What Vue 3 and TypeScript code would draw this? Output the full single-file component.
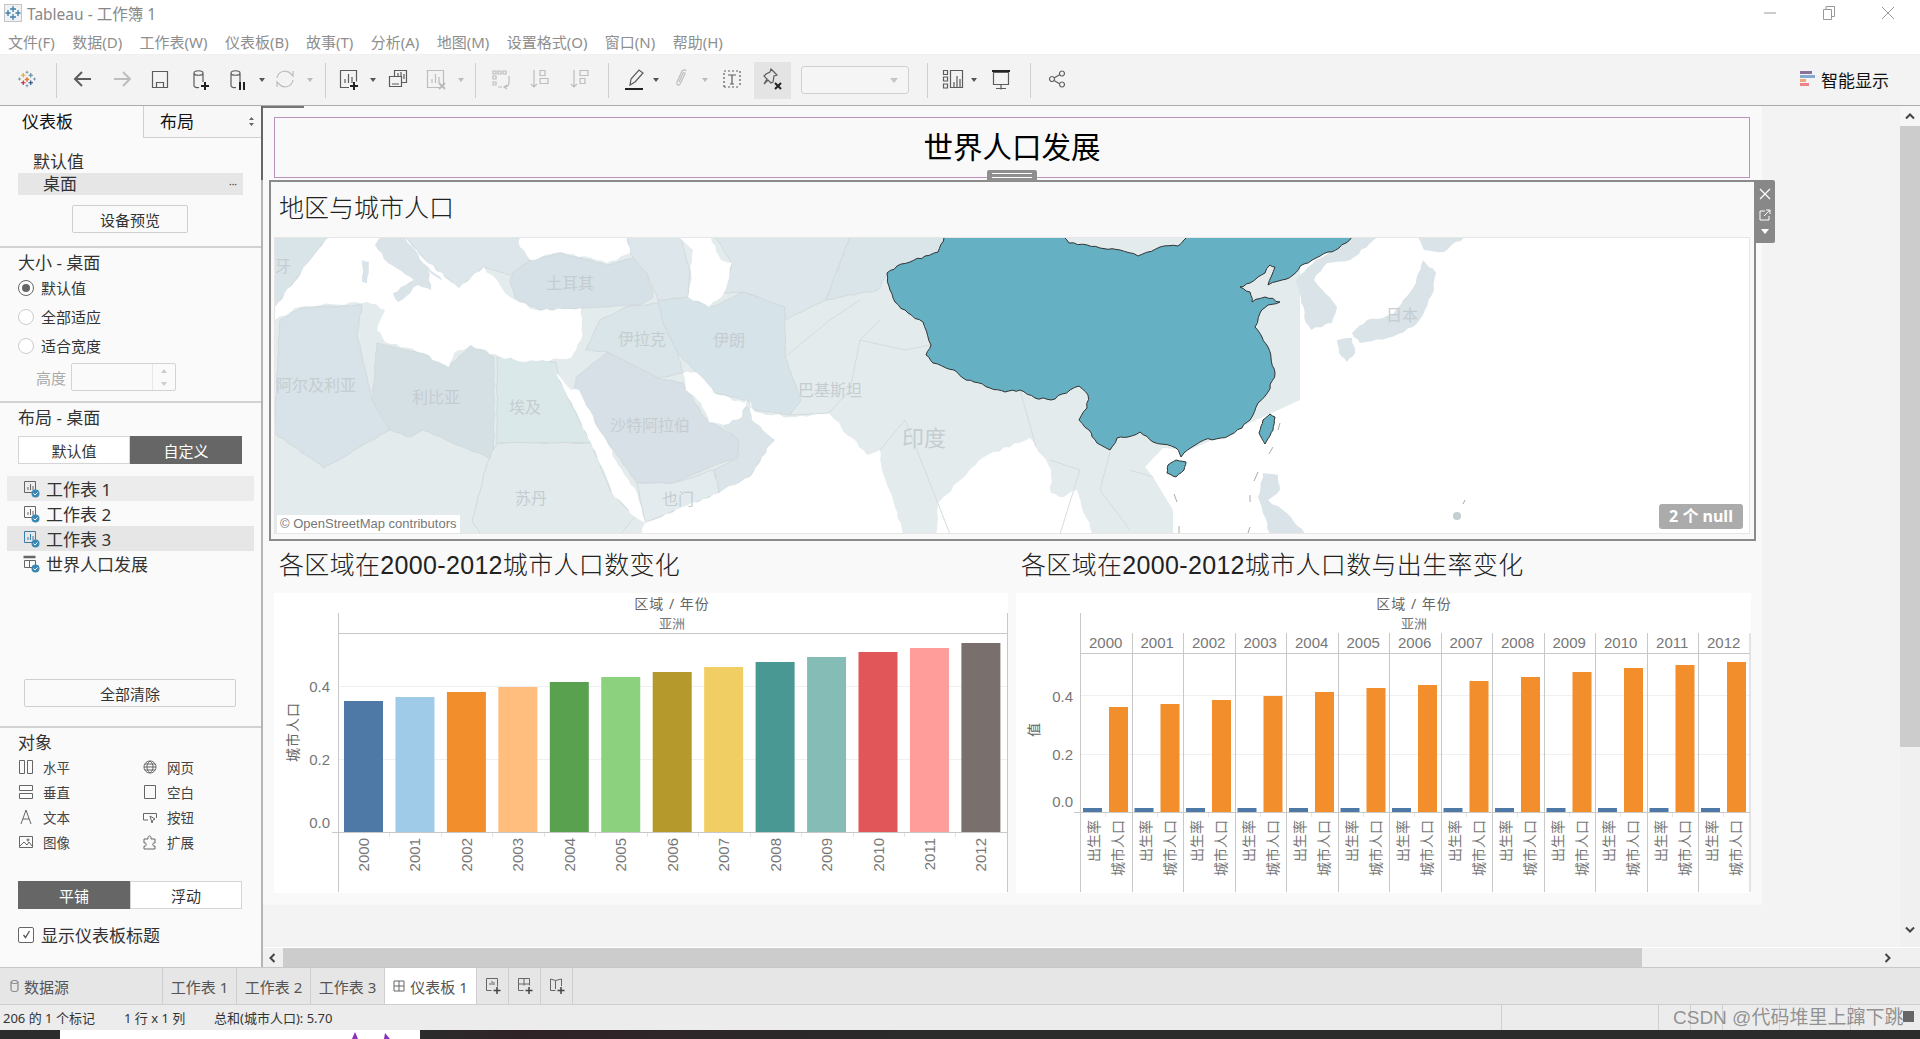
<template>
  <div class="app">
    <header class="titlebar">
      <svg class="app-icon" width="18" height="18" viewBox="0 0 18 18">
        <rect x="0.5" y="0.5" width="17" height="17" fill="#eef2f5" stroke="#c5c5c5" />
        <path d="M9 2v6M6 5h6M9 10v6M6 13h6M4 6v6M1.500 9h5M14 6v6M11.500 9h5" stroke="#3f7fa6" stroke-width="1.300" />
      </svg>
      <span class="app-name">Tableau - 工作簿 1</span>
      <div class="winctl">
        <svg width="14" height="14" viewBox="0 0 14 14"><path d="M1 7h12" stroke="#999" /></svg>
        <svg width="14" height="14" viewBox="0 0 14 14"><path d="M1.500 3.500h8v10h-8zM4 3.500V0.500h8.500v10h-3" fill="none" stroke="#999" /></svg>
        <svg width="14" height="14" viewBox="0 0 14 14"><path d="M1 1l12 12M13 1L1 13" stroke="#999" /></svg>
      </div>
    </header>
    <nav class="menubar">
      <span v-for="m in menus" :key="m">{{ m }}</span>
    </nav>

    <div class="toolbar">
      <template v-for="(t, i) in tools" :key="i">
        <div class="slot" :style="{ width: t.w + 'px' }">
          <i v-if="t.kind === 'sep'" class="sep"></i>
          <i v-else-if="t.kind === 'dd'" class="dd" :class="{ off: t.off }"></i>
          <svg v-else-if="t.kind === 'logo'" class="logo" width="18" height="18" viewBox="0 0 24 24" stroke-width="1.500">
            <path d="M12 9.500v6M9 12.500h6" stroke="#e8762b" stroke-width="2" />
            <path d="M7 4v6M4 7h6" stroke="#e8a02b" />
            <path d="M17 4v6M14 7h6" stroke="#5b879b" />
            <path d="M7 14v6M4 17h6" stroke="#c72037" />
            <path d="M17 14v6M14 17h6" stroke="#1f447e" />
            <path d="M12 1v4M10 3h4M12 19v4M10 21h4M2 10v4M0 12h4M22 10v4M20 12h4" stroke="#5b879b" stroke-width="1" />
          </svg>
          <i v-else-if="t.kind === 'combo'" class="combo"><b></b></i>
          <div v-else class="tool" :class="{ pressed: t.kind === 'pin' }">
            <svg width="24" height="24" viewBox="0 0 24 24" fill="none" :stroke="t.off ? '#bdbdbd' : '#5c5c5c'" :stroke-width="t.sw || 1.200">
              <path :d="t.d" />
              <path v-if="t.bold" :d="t.bold" :stroke="t.off ? '#bdbdbd' : '#222'" stroke-width="2" />
            </svg>
          </div>
        </div>
      </template>
      <div class="showme">
        <svg width="15" height="16" viewBox="0 0 15 16">
          <rect y="0" width="12" height="3" fill="#8a7199" />
          <rect y="4" width="15" height="3" fill="#86a9d0" />
          <rect y="8" width="6" height="3" fill="#f0a77c" />
          <rect y="12" width="9" height="3" fill="#f0808a" />
        </svg>
        <span>智能显示</span>
      </div>
    </div>

    <main class="main">
      <aside class="side">
        <div class="side-tabs">
          <span class="tab-a">仪表板</span>
          <span class="tab-b">布局
            <svg class="updown" width="5" height="9" viewBox="0 0 5 9"><path d="M2.500 0L5 3H0zM2.500 9L0 6h5z" fill="#666" /></svg>
          </span>
        </div>
        <section class="sec sec-device">
          <div class="dev-head">默认值</div>
          <div class="dev-row"><span>桌面</span><em>···</em></div>
          <button class="btn dev-btn">设备预览</button>
        </section>
        <section class="sec sec-size">
          <h4>大小 - 桌面</h4>
          <label v-for="(r, i) in radios" :key="r" class="radio"><i :class="{ on: i === 0 }"></i>{{ r }}</label>
          <div class="height-row">
            <span>高度</span>
            <div class="spin"><div class="spin-btns"><i class="up"></i><i class="down"></i></div></div>
          </div>
        </section>
        <section class="sec sec-layout">
          <h4>布局 - 桌面</h4>
          <div class="seg"><span>默认值</span><span class="dark">自定义</span></div>
          <ul class="sheets">
            <li v-for="(s, i) in sheets" :key="s" :class="'row' + i">
              <svg width="18" height="18" viewBox="0 0 18 18" fill="none">
                <path v-if="i < 3" d="M2.500 1.500h11v11h-11zM6 10V7M8.500 10V4M11 10V6" :stroke="i === 2 ? '#3c7ca6' : '#666'" />
                <path v-else d="M1.500 2h12" stroke="#666" stroke-width="2.500" /><path v-if="i === 3" d="M2.500 5.500h11v7h-11zM7.500 5.500v7" stroke="#666" />
                <circle cx="13.500" cy="13.500" r="4" fill="#3c88b5" />
                <path d="M11.500 13.500l1.500 1.500 2.500-2.500" stroke="#fff" />
              </svg>
              {{ s }}
            </li>
          </ul>
          <button class="btn clear-btn">全部清除</button>
        </section>
        <section class="sec sec-objects">
          <h4>对象</h4>
          <div class="objects">
            <div v-for="o in objects" :key="o.t" class="obj">
              <svg width="16" height="16" viewBox="0 0 16 16" fill="none" stroke="#666"><path :d="o.d" /></svg>
              <span>{{ o.t }}</span>
            </div>
          </div>
          <div class="seg seg-mode"><span class="dark">平铺</span><span>浮动</span></div>
          <label class="check">
            <i><svg width="11" height="11" viewBox="0 0 11 11"><path d="M2.500 6l2 2.500L8.500 2" fill="none" stroke="#555" stroke-width="1.300" /></svg></i>
            显示仪表板标题
          </label>
        </section>
      </aside>

      <div class="work">
        <div class="work-top">
          <div class="stage">
            <div class="canvas">
              <div class="dash-title"><span>世界人口发展</span><i class="handle"></i></div>
              <div class="zone">
                <div class="zone-title">地区与城市人口</div>
                <div class="map">
                  <svg width="1476" height="297" viewBox="274 237 1476 297">
                    <rect x="274" y="237" width="1476" height="297" fill="#fff" />
                    <polygon points="274,237 1300,237 1300,400 1190,450 1163,448 1145,467 1153,477 1173,510 1173,534 274,534" fill="#e3ebed" />
                    <polygon v-for="(c, i) in countries" :key="'c' + i" :points="c.p" :fill="c.f" stroke="#d3dadd" stroke-width="1" />
                    <polygon v-for="(s, i) in seas" :key="'s' + i" :points="s" fill="#fff" />
                    <polygon v-for="(c, i) in islands" :key="'l' + i" :points="c" fill="#d9e3e8" />
                    <polyline v-for="(b, i) in borders" :key="'b' + i" :points="b" fill="none" stroke="#d5dcde" stroke-width="1" />
                    <polygon :points="china" fill="#65b0c3" stroke="#333" stroke-width="1" stroke-linejoin="round" />
                    <polygon :points="taiwan" fill="#65b0c3" stroke="#333" />
                    <polygon :points="hainan" fill="#65b0c3" stroke="#333" />
                    <path d="M1280 423l-2 7M1273 447l-4 7M1258 472l-4 9M1174 494l3 8M1250 495v7M1179 526v7M1250 527l-2 6M1465 500l-2 4" stroke="#aaa" stroke-width="1" />
                    <circle cx="1457" cy="516" r="4" fill="#c4ced3" />
                    <text v-for="l in mapLabels" :key="l.t" :x="l.x" :y="l.y" :font-size="l.s || 16" class="map-label">{{ l.t }}</text>
                  </svg>
                  <span class="osm">© OpenStreetMap contributors</span>
                  <span class="nulls">2 个 null</span>
                </div>
                <div class="zone-tools">
                  <svg width="14" height="14" viewBox="0 0 14 14"><path d="M2 2l10 10M12 2L2 12" stroke="#fff" stroke-width="1.300" /></svg>
                  <svg width="14" height="14" viewBox="0 0 14 14" fill="none" stroke="#fff"><path d="M7 3H2v9h9V8M6 8l6-6M8 2h4v4" /></svg>
                  <i></i>
                </div>
              </div>
              <div class="charts">
                <div class="sheet">
                  <div class="sheet-title">各区域在2000-2012城市人口数变化</div>
                  <svg class="chart" width="734" height="300" viewBox="274 593 734 300">
                    <text x="672" y="609" class="hdr">区域 / 年份</text>
                    <text x="672" y="628" class="sub">亚洲</text>
                    <path d="M338 686.500H1007M338 759.500H1007" stroke="#f0f0f0" />
                    <rect v-for="(h, i) in popBars" :key="i" :x="344 + i * 51.45" :y="832 - h" width="39" :height="h" :fill="palette[i]" />
                    <path v-for="(h, i) in popBars" :key="'t' + i" :d="`M${Math.round(338 + i * 51.45) + 0.5} 832V837`" stroke="#e4e4e4" />
                    <path d="M338.500 613V892M338 633.500H1007M332 832.500H1007M1007.500 613V892" stroke="#c8c8c8" fill="none" />
                    <text x="330" y="692" class="tick">0.4</text>
                    <text x="330" y="765" class="tick">0.2</text>
                    <text x="330" y="828" class="tick">0.0</text>
                    <text transform="translate(298 762) rotate(-90)" class="axis">城市人口</text>
                    <text v-for="(y, i) in years" :key="y" :transform="`translate(${369 + i * 51.45} 838) rotate(-90)`" class="yr">{{ y }}</text>
                  </svg>
                </div>
                <div class="sheet">
                  <div class="sheet-title">各区域在2000-2012城市人口数与出生率变化</div>
                  <svg class="chart" width="735" height="300" viewBox="1016 593 735 300">
                    <text x="1414" y="609" class="hdr">区域 / 年份</text>
                    <text x="1414" y="628" class="sub">亚洲</text>
                    <path d="M1080 695.500H1750M1080 754.500H1750" stroke="#f0f0f0" />
                    <g v-for="(y, i) in years" :key="y">
                      <text :x="1105.700 + i * 51.5" y="648" class="yr2">{{ y }}</text>
                      <path :d="`M${Math.round(1080 + i * 51.5) + 0.5} 633V892`" stroke="#c8c8c8" />
                      <path :d="`M${Math.round(1105 + i * 51.5) + 0.5} 812V817`" stroke="#e4e4e4" />
                      <rect :x="1083 + i * 51.5" y="808" width="19" height="4" fill="#4e79a7" />
                      <rect :x="1109 + i * 51.5" :y="812 - rateBars[i]" width="19" :height="rateBars[i]" fill="#f28e2b" />
                      <text :transform="`translate(${1099 + i * 51.5} 820) rotate(-90)`" class="lbl">出生率</text>
                      <text :transform="`translate(${1123 + i * 51.5} 820) rotate(-90)`" class="lbl">城市人口</text>
                    </g>
                    <path d="M1750 633V892" stroke="#c8c8c8" />
                    <path d="M1080 653.500H1750M1074 812.500H1750" stroke="#c8c8c8" />
                    <path d="M1080.500 613V633" stroke="#c8c8c8" />
                    <text x="1073" y="702" class="tick">0.4</text>
                    <text x="1073" y="760" class="tick">0.2</text>
                    <text x="1073" y="807" class="tick">0.0</text>
                    <text transform="translate(1039 737) rotate(-90)" class="axis">值</text>
                  </svg>
                </div>
              </div>
            </div>
          </div>
          <div class="vscroll">
            <span class="arrow-box"><svg width="12" height="8" viewBox="0 0 12 8"><path d="M2 6.500l4-4 4 4" fill="none" stroke="#444" stroke-width="2" /></svg></span>
            <span class="vthumb"></span>
            <span class="arrow-end"><svg width="12" height="8" viewBox="0 0 12 8"><path d="M2 1.500l4 4 4-4" fill="none" stroke="#444" stroke-width="2" /></svg></span>
          </div>
        </div>
        <div class="hscroll">
          <svg width="8" height="12" viewBox="0 0 8 12"><path d="M6.500 2l-4 4 4 4" fill="none" stroke="#444" stroke-width="2" /></svg>
          <span class="hthumb"></span>
          <svg class="h-right" width="8" height="12" viewBox="0 0 8 12"><path d="M1.500 2l4 4-4 4" fill="none" stroke="#444" stroke-width="2" /></svg>
        </div>
      </div>
    </main>

    <div class="tabs">
      <div class="tab ds">
        <svg width="9" height="14" viewBox="0 0 9 14" fill="none" stroke="#777"><path d="M1 3c0-2 7-2 7 0v8c0 2-7 2-7 0zM1 3c0 2 7 2 7 0" /></svg>
        数据源
      </div>
      <div v-for="s in ['工作表 1', '工作表 2', '工作表 3']" :key="s" class="tab sh">{{ s }}</div>
      <div class="tab active">
        <svg width="12" height="12" viewBox="0 0 12 12" fill="none" stroke="#666"><path d="M1 1h10v10H1zM6 1v10M1 6h10" /></svg>
        仪表板 1
      </div>
      <div v-for="d in tabAdds" :key="d" class="tab add">
        <svg width="18" height="18" viewBox="0 0 18 18" fill="none" stroke="#666"><path :d="d" /><path d="M13 10v7M9.500 13.500h7" stroke="#444" stroke-width="1.500" /></svg>
      </div>
    </div>

    <div class="status">
      <span class="st st1">206 的 1 个标记</span>
      <span class="st st2">1 行 x 1 列</span>
      <span class="st st3">总和(城市人口): 5.70</span>
      <div class="cells">
        <i v-for="(w, i) in [157, 32, 32, 57, 71, 70]" :key="i" :style="{ width: w + 'px' }"></i>
      </div>
      <b class="corner"></b>
      <span class="mark">CSDN @代码堆里上蹿下跳</span>
    </div>
    <div class="taskbar">
      <div class="task-win">
        <svg width="360" height="9" viewBox="0 0 360 9"><path d="M292 9l3-7 3 7zM324 9l1-6 5 6z" fill="#8a2fc0" /></svg>
      </div>
    </div>
  </div>
</template>

<script setup lang="ts">
interface Tool {
  w: number
  kind?: 'sep' | 'dd' | 'logo' | 'combo' | 'pin'
  d?: string
  bold?: string
  off?: boolean
  sw?: number
}

const menus = ['文件(F)', '数据(D)', '工作表(W)', '仪表板(B)', '故事(T)', '分析(A)', '地图(M)', '设置格式(O)', '窗口(N)', '帮助(H)']

const can = 'M6 6c0-3 9-3 9 0v9M6 6c0 3 9 3 9 0M6 6v13c0 1 3 2 5 1.500'
const tools: Tool[] = [
  { w: 54, kind: 'logo' },
  { w: 4, kind: 'sep' },
  { w: 50, d: 'M20 12H5M11 5l-7 7 7 7', sw: 2 },
  { w: 28, d: 'M4 12h15M13 5l7 7-7 7', sw: 2, off: true },
  { w: 48, d: 'M4.500 4.500h15v16h-15zM8.500 20.500v-5h7v5' },
  { w: 32, d: can, bold: 'M17 15v8M13 19h8' },
  { w: 42, d: can, bold: 'M15 15v8M19 15v8' },
  { w: 8, kind: 'dd' },
  { w: 38, d: 'M4 11a8 8 0 0 1 14-4l2 2V4M20 13a8 8 0 0 1-14 4l-2-2v5', off: true },
  { w: 12, kind: 'dd', off: true },
  { w: 18, kind: 'sep' },
  { w: 30, d: 'M12 20.500H3.500v-17h16v11M8 16v-4M11.500 16V7M15 16v-6', bold: 'M17 15v8M13 19h8' },
  { w: 18, kind: 'dd' },
  { w: 32, d: 'M8.500 9V3.500h12v12H16M3.500 9.500h12v10h-12zM12 9V6M15 9V5M18 12V7M6 17h7' },
  { w: 44, d: 'M3.500 3.500h16v17h-16zM8 16v-4M11.500 16V7M15 16v-6', bold: 'M15 16l6 6M21 16l-6 6', off: true },
  { w: 6, kind: 'dd', off: true },
  { w: 22, kind: 'sep' },
  { w: 30, d: 'M4 4h3v3H4zM9 4h3v3H9zM14 4h3v3h-3zM4 9h3v3H4zM4 15h3v3H4zM9 20h4M20 9v6c0 3-2 5-5 5M18 18l-3 2 3 2', off: true },
  { w: 48, d: 'M6 3v17M3 17l3 3 3-3M12 3.500h5v5h-5zM12 11.500h8v5h-8z', off: true },
  { w: 32, d: 'M6 3v17M3 17l3 3 3-3M12 3.500h8v5h-8zM12 11.500h5v5h-5z', off: true },
  { w: 24, kind: 'sep' },
  { w: 28, d: 'M8 18l1-6 8-9 4 3-8 9zM8 18l5-3', bold: 'M3 22h18' },
  { w: 16, kind: 'dd' },
  { w: 34, d: 'M17 4c-1-2-3-1-4 0l-5 11c-1 3 2 4 3 2l5-10c.5-1-1-2-2-1l-4 9', off: true },
  { w: 14, kind: 'dd', off: true },
  { w: 40, d: 'M4 4h2M8 4h2M12 4h2M16 4h2M20 4v2M20 8v2M20 12v2M20 16v2M4 20h2M8 20h2M12 20h2M16 20h2M4 6v2M4 10v2M4 14v2M4 18v2M8 8h8M12 8v9M10 17h4' },
  { w: 40, kind: 'pin', d: 'M11 2l6 6-3 1-1 6-2 1-3-3-4 4 3-5-3-3 2-2 4-2z', bold: 'M15 16l6 6M21 16l-6 6' },
  { w: 126, kind: 'combo' },
  { w: 18, kind: 'sep' },
  { w: 34, d: 'M2.500 3.500h4v4h-4zM2.500 10h4v4h-4zM2.500 17h4v4h-4zM9.500 3.500h12v17h-12zM13 20v-5M16 20V9M19 20v-8' },
  { w: 8, kind: 'dd' },
  { w: 46, d: 'M4.500 5.500h15v12h-15zM12 17.500v5M7 21.500h10', bold: 'M3 4h18' },
  { w: 12, kind: 'sep' },
  { w: 42, d: 'M17 4a2.500 2.500 0 1 1-.01 0M17 15a2.500 2.500 0 1 1-.01 0M7 9.500a2.500 2.500 0 1 1-.01 0M9 11l6-3.500M9 13.500l6 3.500' },
]

const radios = ['默认值', '全部适应', '适合宽度']
const sheets = ['工作表 1', '工作表 2', '工作表 3', '世界人口发展']

const objects = [
  { t: '水平', d: 'M1.500 1.500h5v13h-5zM9.500 1.500h5v13h-5z' },
  { t: '网页', d: 'M8 2a6 6 0 1 0 .01 0M8 2c-4 3-4 9 0 12M8 2c4 3 4 9 0 12M2 8h12M3 5h10M3 11h10' },
  { t: '垂直', d: 'M1.500 1.500h13v5h-13zM1.500 9.500h13v5h-13z' },
  { t: '空白', d: 'M2.500 1.500h11v13h-11z' },
  { t: '文本', d: 'M3 15L8 1l5 14M5 10h6' },
  { t: '按钮', d: 'M6 11H1.500V4.500h13V9M8 7l5 3-2 1-1 3z' },
  { t: '图像', d: 'M1.500 2.500h13v11h-13zM2 12l4-4 3 3 2-3 3 4M10 5a1 1 0 1 0 .01 0' },
  { t: '扩展', d: 'M2 5h4c-1-4 4-4 3 0h4v4c-3-1-3 4 0 3v3H2v-3c3 1 3-4 0-3z' },
]

const tabAdds = [
  'M2.500 1.500h11v8M2.500 1.500v12h5M6 8V6M8 8V4M10 8V5',
  'M2.500 1.500h11v7M2.500 1.500v12h5M8 1.500v7M2.500 7h11',
  'M2.500 2v11.500h5M13.500 2v7M2.500 2l5 1.500L13.500 2M7.500 3.500V12',
]

const years = Array.from({ length: 13 }, (_, i) => 2000 + i)
const palette = ['#4e79a7', '#a0cbe8', '#f28e2b', '#ffbe7d', '#59a14f', '#8cd17d', '#b6992d', '#f1ce63', '#499894', '#86bcb6', '#e15759', '#ff9d9a', '#79706e']
const popBars = [131, 135, 140, 145, 150, 155, 160, 165, 170, 175, 180, 184, 189]
const rateBars = [105, 108, 112, 116, 120, 124, 127, 131, 135, 140, 144, 147, 150]

// breaks straight segments up so coastlines don't look like hand-cut polygons
const rough = (src: string, amp: number, step = 6): string => {
  const pts = src.split(' ').map((p) => p.split(',').map(Number))
  const out: string[] = []
  pts.forEach((a, i) => {
    const b = pts[(i + 1) % pts.length]
    const len = Math.hypot(b[0] - a[0], b[1] - a[1])
    const n = Math.max(1, Math.ceil(len / step))
    const edge = (a[1] <= 237 && b[1] <= 237) || (a[1] >= 534 && b[1] >= 534)
    for (let k = 0; k < n; k++) {
      const t = k / n
      const x = a[0] + (b[0] - a[0]) * t
      const y = a[1] + (b[1] - a[1]) * t
      const h = Math.sin(x * 12.9898 + y * 78.233) * 43758.5453
      const off = k === 0 || edge ? 0 : (h - Math.floor(h) - 0.5) * 2 * amp
      out.push(`${(x - ((b[1] - a[1]) / len) * off).toFixed(1)},${(y + ((b[0] - a[0]) / len) * off).toFixed(1)}`)
    }
  })
  return out.join(' ')
}

// all map points are page coordinates, the svg viewBox lines up with them
const countries = [
  { f: '#d9e4e8', p: '274,237 326,237 301,273 275,307 274,320' },
  { f: '#d7e3e8', p: '280,320 301,308 362,305 357,333 372,400 390,430 324,468 274,433' },
  { f: '#d5e0e5', p: '377,343 423,353 449,367 471,345 494,357 494,460 423,430 410,437 390,430 372,400' },
  { f: '#dae8e9', p: '497,357 556,362 558,377 591,443 497,443' },
  { f: '#e2eaec', p: '497,443 591,443 612,493 635,517 620,534 480,534 472,520 487,463' },
  { f: '#d5e1e6', p: '510,280 520,262 560,253 607,265 640,255 647,273 653,297 640,305 583,308 540,310 515,298' },
  { f: '#d9e5e9', p: '586,350 600,320 627,307 658,303 663,323 678,353 683,373 658,378 607,352' },
  { f: '#d6e3e8', p: '663,323 658,300 688,297 711,307 744,292 785,307 785,357 801,400 790,415 755,410 747,400 714,393 696,372 678,353' },
  { f: '#d8e0e7', p: '576,377 607,352 658,378 683,383 704,417 739,440 737,457 673,483 637,483 597,427 574,390' },
  { f: '#dbe4e9', p: '747,407 775,440 762,457 750,477 719,493 714,470 739,457 739,440 724,425' },
  { f: '#e3ebee', p: '637,483 673,483 714,470 719,493 645,523' },
  { f: '#dde7eb', p: '715,237 850,237 826,300 785,320 785,307 744,292 724,293 732,263' },
  { f: '#dae5e9', p: '850,237 945,237 938,252 910,262 887,273 878,290 826,300' },
  { f: '#dde7eb', p: '330,237 520,237 530,260 510,275 484,267 459,288 428,263 405,237' },
  { f: '#dde7eb', p: '627,237 680,237 690,273 688,297 658,300 647,273 630,253' },
].map((c) => ({ f: c.f, p: rough(c.p, 0.7) }))
const seas = [
  '275,320 275,307 301,273 326,240 331,237 405,237 428,263 459,288 484,267 510,297 535,310 581,308 581,340 571,358 525,362 500,357 471,345 454,353 449,367 423,353 385,342 377,330 385,310 367,302 321,305 295,308',
  '520,237 627,237 630,253 607,263 561,252 530,260 520,247',
  '678,237 711,237 721,260 732,263 724,293 709,307 688,297 691,273 693,250',
  '556,373 571,390 579,390 597,427 622,470 637,493 645,523 635,517 612,493 591,443 566,393',
  '683,373 696,372 714,393 744,403 747,400 742,417 724,425 709,422 701,403 686,390',
  '750,400 755,412 790,417 829,413 841,427 867,455 880,450 882,470 903,534 642,534 645,523 719,493 750,477 762,457 775,440 752,420',
  '936,534 938,503 984,457 1030,438 1036,447 1051,470 1051,493 1064,497 1077,490 1092,534',
].map((s) => rough(s, 1.5))
const islands = [
  '380,237 405,237 423,263 443,281 428,270 431,290 418,285 398,302 393,293 414,280 388,263 375,245',
  '362,260 369,262 367,283 362,282',
  '1350,237 1378,237 1350,260 1327,263 1314,280 1337,307 1332,323 1311,330 1306,323 1301,297 1296,280 1316,260 1340,247',
  '1418,237 1464,237 1444,252 1424,250',
  '1423,260 1436,273 1434,290 1423,315 1413,327 1388,338 1360,343 1352,333 1367,320 1393,315 1403,300 1416,283',
  '1337,340 1352,338 1355,353 1347,362 1339,353',
  '1263,473 1278,475 1280,490 1268,500 1291,517 1305,534 1270,534 1258,497',
].map((s) => rough(s, 1.2))
const borders = [
  '1036,447 1020,390 1000,392', '1060,534 1080,470 1050,460', '1110,452 1100,490 1130,530', '1130,470 1153,477',
  '785,357 830,320 860,300', '790,415 829,413 850,390 860,340 880,320', '860,340 905,350 930,345',
  '950,534 905,420 880,450',
]
const china = rough(
  '944,237 938,252 925,256 910,262 897,266 887,273 890,290 895,302 908,313 923,322 931,345 926,355 933,363 954,370 963,378 974,382 990,388 1005,392 1020,390 1035,398 1051,400 1062,394 1070,390 1079,386 1088,395 1087,408 1079,420 1089,430 1097,443 1110,450 1117,438 1128,437 1140,432 1153,442 1176,448 1181,457 1192,447 1204,440 1216,439 1230,435 1242,428 1250,420 1258,403 1268,392 1275,373 1271,358 1268,347 1262,337 1255,327 1260,313 1268,305 1280,302 1265,297 1252,302 1250,292 1240,287 1250,283 1258,277 1265,273 1270,265 1275,267 1268,285 1282,280 1293,275 1304,264 1316,258 1328,252 1339,248 1346,243 1352,237 1187,237 1178,246 1160,247 1138,256 1120,250 1100,248 1069,243 1064,237',
  1.2,
  5,
)
const taiwan = rough('1270,414 1275,417 1273,430 1265,444 1259,433 1263,420', 0.4, 4)
const hainan = rough('1176,460 1186,462 1184,470 1176,477 1167,473 1168,465', 0.4, 4)

const mapLabels = [
  { t: '牙', x: 283, y: 272 },
  { t: '土耳其', x: 570, y: 289 },
  { t: '伊拉克', x: 642, y: 345 },
  { t: '伊朗', x: 729, y: 346 },
  { t: '阿尔及利亚', x: 316, y: 391 },
  { t: '利比亚', x: 436, y: 403 },
  { t: '埃及', x: 525, y: 413 },
  { t: '沙特阿拉伯', x: 650, y: 431 },
  { t: '巴基斯坦', x: 830, y: 396 },
  { t: '印度', x: 924, y: 446, s: 22 },
  { t: '苏丹', x: 531, y: 504 },
  { t: '也门', x: 678, y: 505 },
  { t: '日本', x: 1402, y: 321 },
]
</script>

<style>
html,
body {
  margin: 0;
  background: #fff;
}
</style>

<style scoped>
.app {
  width: 1920px;
  height: 1039px;
  overflow: hidden;
  display: flex;
  flex-direction: column;
  font-family: "Noto Sans", "Noto Sans CJK SC", sans-serif;
  color: #333;
  background: #fff;
}
.titlebar {
  height: 30px;
  display: flex;
  align-items: center;
  padding: 0 0 4px 4px;
  box-sizing: border-box;
  font-size: 15.500px;
  color: #888;
}
.app-icon {
  margin-right: 5px;
}
.winctl {
  margin-left: auto;
  display: flex;
  gap: 45px;
  margin-right: 25px;
}
.menubar {
  height: 24px;
  display: flex;
  gap: 17.400px;
  padding: 0 0 2px 8px;
  box-sizing: border-box;
  align-items: center;
  font-size: 15px;
  color: #8e8e8e;
}
.toolbar {
  height: 52px;
  box-sizing: border-box;
  background: #f3f3f3;
  border-bottom: 1px solid #ababab;
  border-top: 1px solid #f0f0f0;
  display: flex;
  align-items: center;
}
.slot {
  height: 100%;
  display: flex;
  align-items: center;
  justify-content: center;
  flex: none;
}
.sep {
  width: 1px;
  height: 35px;
  background: #cfcfcf;
}
.dd {
  width: 0;
  height: 0;
  border-left: 3px solid transparent;
  border-right: 3px solid transparent;
  border-top: 4px solid #555;
}
.dd.off {
  border-top-color: #bbb;
}
.logo {
  margin-top: -2px;
}
.tool {
  display: flex;
  align-items: center;
  justify-content: center;
}
.tool svg {
  margin-top: -2px;
}
.tool.pressed {
  width: 37px;
  height: 37px;
  background: #e4e4e4;
}
.combo {
  width: 108px;
  height: 28px;
  box-sizing: border-box;
  border: 1px solid #d0d0d0;
  border-radius: 3px;
  position: relative;
  background: #f5f5f5;
}
.combo b {
  position: absolute;
  right: 10px;
  top: 11px;
  border-left: 4px solid transparent;
  border-right: 4px solid transparent;
  border-top: 5px solid #c4c4c4;
}
.showme {
  margin: -2px 31px 0 auto;
  display: flex;
  align-items: center;
  gap: 6px;
  font-size: 17px;
  color: #111;
}
.main {
  height: 861px;
  display: flex;
}
.side {
  width: 261px;
  flex: none;
  background: #fafafa;
  display: flex;
  flex-direction: column;
  border-right: 2px solid #b5b5b5;
  box-sizing: content-box;
}
.side-tabs {
  height: 32px;
  display: flex;
  font-size: 17px;
  color: #111;
}
.tab-a {
  width: 143px;
  padding-left: 22px;
  box-sizing: border-box;
  line-height: 32px;
}
.tab-b {
  flex: 1;
  padding-left: 16px;
  line-height: 31px;
  border-left: 1px solid #cfcfcf;
  border-bottom: 1px solid #cfcfcf;
  position: relative;
  background: #f7f7f7;
}
.updown {
  position: absolute;
  right: 7px;
  top: 11px;
}
.sec {
  box-sizing: border-box;
  border-bottom: 2px solid #d2d2d2;
}
.sec h4 {
  margin: 0;
  font-size: 17px;
  font-weight: 400;
  color: #333;
  padding-left: 18px;
  line-height: 22px;
}
.sec-device {
  height: 110px;
  padding-top: 13px;
}
.dev-head {
  padding-left: 33px;
  font-size: 17px;
  line-height: 22px;
}
.dev-row {
  margin: 0 18px;
  height: 22px;
  background: #e6e6e6;
  padding-left: 25px;
  font-size: 17px;
  line-height: 22px;
  display: flex;
  justify-content: space-between;
}
.dev-row em {
  font-style: normal;
  font-size: 10px;
  padding-right: 6px;
}
.btn {
  display: block;
  box-sizing: border-box;
  font: inherit;
  font-size: 15px;
  color: #333;
  background: #fafafa;
  border: 1px solid #cfcfcf;
  border-radius: 2px;
  padding: 0;
}
.dev-btn {
  width: 116px;
  height: 28px;
  margin: 10px 0 0 72px;
}
.sec-size {
  height: 155px;
  padding-top: 4px;
}
.radio {
  display: flex;
  align-items: center;
  height: 29px;
  padding-left: 18px;
  font-size: 15px;
  color: #333;
  gap: 7px;
}
.radio:first-of-type {
  margin-top: -1px;
}
.radio i {
  width: 14px;
  height: 14px;
  border-radius: 50%;
  border: 1px solid #ccc;
  background: #fff;
  position: relative;
}
.radio i.on {
  border-color: #666;
}
.radio i.on::after {
  content: "";
  position: absolute;
  left: 3px;
  top: 3px;
  width: 8px;
  height: 8px;
  border-radius: 50%;
  background: #666;
}
.height-row {
  display: flex;
  align-items: center;
  padding-left: 36px;
  gap: 5px;
  font-size: 15px;
  color: #aaa;
  margin-top: 3px;
}
.spin {
  width: 105px;
  height: 28px;
  box-sizing: border-box;
  border: 1px solid #d3d3d3;
  border-radius: 2px;
  display: flex;
  justify-content: flex-end;
}
.spin-btns {
  width: 22px;
  border-left: 1px solid #e8e8e8;
  display: flex;
  flex-direction: column;
  align-items: center;
  justify-content: space-around;
}
.spin-btns i {
  border-left: 3.500px solid transparent;
  border-right: 3.500px solid transparent;
}
.spin-btns .up {
  border-bottom: 4px solid #ccc;
}
.spin-btns .down {
  border-top: 4px solid #ccc;
}
.sec-layout {
  height: 325px;
  padding-top: 4px;
}
.seg {
  display: flex;
  width: 224px;
  height: 28px;
  margin: 7px 0 0 18px;
  font-size: 15px;
}
.seg span {
  flex: 1;
  display: flex;
  align-items: center;
  justify-content: center;
  border: 1px solid #d5d5d5;
  background: #fff;
  color: #333;
  box-sizing: border-box;
}
.seg .dark {
  background: #666;
  border-color: #666;
  color: #fff;
}
.sheets {
  list-style: none;
  margin: 12px 0 0 7px;
  padding: 0;
  width: 247px;
}
.sheets li {
  height: 25px;
  display: flex;
  align-items: center;
  gap: 6px;
  padding-left: 15px;
  font-size: 17px;
  color: #333;
}
.sheets .row0 {
  background: #ececec;
}
.sheets .row2 {
  background: #e6e6e6;
}
.clear-btn {
  width: 212px;
  height: 28px;
  margin: 103px 0 0 24px;
}
.sec-objects {
  flex: 1;
  border-bottom: none;
  padding-top: 4px;
}
.objects {
  display: grid;
  grid-template-columns: 124px 1fr;
  padding: 0 0 0 18px;
}
.obj {
  height: 25px;
  display: flex;
  align-items: center;
  gap: 9px;
  font-size: 13.500px;
  color: #444;
}
.seg-mode {
  margin-top: 27px;
}
.check {
  display: flex;
  align-items: center;
  gap: 7px;
  margin: 13px 0 0 18px;
  font-size: 17px;
  color: #333;
}
.check i {
  width: 16px;
  height: 16px;
  box-sizing: border-box;
  border: 1px solid #666;
  border-radius: 2px;
  background: #fff;
  display: flex;
  align-items: center;
  justify-content: center;
}
.work {
  flex: 1;
  min-width: 0;
  display: flex;
  flex-direction: column;
  background: #f3f3f3;
}
.work-top {
  height: 841px;
  display: flex;
}
.stage {
  flex: 1;
  min-width: 0;
  position: relative;
}
.stage::before {
  content: "";
  position: absolute;
  left: 0;
  top: 0;
  width: 41px;
  height: 2px;
  background: #777;
}
.stage::after {
  content: "";
  position: absolute;
  left: -2px;
  top: 0;
  width: 2px;
  height: 74px;
  background: #666;
}
.canvas {
  width: 1499px;
  height: 799px;
  box-sizing: border-box;
  padding: 11px 0 0 11px;
  background: #f9f9f9;
}
.dash-title {
  position: relative;
  width: 1476px;
  height: 61px;
  box-sizing: border-box;
  border: 1px solid #bb92bb;
  display: flex;
  align-items: center;
  justify-content: center;
  font-size: 29.500px;
  color: #000;
  font-family: "Liberation Sans", "Noto Sans CJK SC", sans-serif;
}
.dash-title span {
  margin-top: -5px;
}
.handle {
  position: absolute;
  left: 712px;
  bottom: -4px;
  width: 50px;
  height: 11px;
  box-sizing: border-box;
  background: #8f8f8f;
  border-radius: 2px 2px 0 0;
  z-index: 2;
}
.handle::after {
  content: "";
  position: absolute;
  left: 5px;
  right: 5px;
  top: 3px;
  height: 3px;
  border-top: 1px solid #fff;
  border-bottom: 1px solid #fff;
}
.zone {
  position: relative;
  width: 1487px;
  height: 361px;
  box-sizing: border-box;
  margin: 2px 0 0 -5px;
  border: 2px solid #8a8a8a;
  padding-left: 3px;
}
.zone-title,
.sheet-title {
  font-family: "Liberation Sans", "Noto Sans CJK SC", sans-serif;
  font-size: 25px;
  font-weight: 300;
  color: #222;
}
.zone-title {
  height: 55px;
  line-height: 52px;
  padding-left: 5px;
}
.map {
  position: relative;
  width: 1476px;
  height: 297px;
  outline: 1px solid #e6e6e6;
  outline-offset: -1px;
}
.map svg {
  display: block;
}
.map-label {
  fill: #c5cdd1;
  text-anchor: middle;
}
.osm {
  position: absolute;
  left: 3px;
  bottom: 1px;
  height: 18px;
  line-height: 18px;
  padding: 0 3px;
  background: #fff;
  font-family: "Liberation Sans", sans-serif;
  font-size: 13px;
  color: #777;
}
.nulls {
  position: absolute;
  right: 7px;
  bottom: 5px;
  width: 84px;
  height: 25px;
  border-radius: 3px;
  background: #ababab;
  color: #fff;
  font-weight: 700;
  font-size: 16px;
  line-height: 25px;
  text-align: center;
}
.zone-tools {
  position: absolute;
  left: 1484px;
  top: -2px;
  width: 20px;
  height: 63px;
  background: #888;
  border-radius: 0 2px 2px 0;
  display: flex;
  flex-direction: column;
  align-items: center;
  justify-content: space-around;
  padding: 3px 0 6px;
  box-sizing: border-box;
}
.zone-tools i {
  border-left: 4px solid transparent;
  border-right: 4px solid transparent;
  border-top: 5px solid #fff;
}
.charts {
  display: flex;
  gap: 8px;
}
.sheet-title {
  height: 52px;
  line-height: 48px;
  padding-left: 5px;
  white-space: nowrap;
  letter-spacing: 0.33px;
}
.sheet {
  width: 734px;
}
.chart {
  display: block;
  background: #fff;
}
.hdr {
  font-size: 14px;
  fill: #666;
  text-anchor: middle;
  letter-spacing: 1px;
}
.sub {
  font-size: 13px;
  fill: #777;
  text-anchor: middle;
}
.tick {
  font-family: "Liberation Sans", sans-serif;
  font-size: 15px;
  fill: #777;
  text-anchor: end;
}
.axis {
  font-size: 14px;
  fill: #666;
  text-anchor: start;
  letter-spacing: 1px;
}
.yr,
.yr2 {
  font-family: "Liberation Sans", sans-serif;
  font-size: 15px;
  fill: #777;
}
.yr {
  text-anchor: end;
}
.yr2 {
  text-anchor: middle;
}
.lbl {
  font-size: 14px;
  fill: #777;
  text-anchor: end;
}
.vscroll {
  width: 20px;
  flex: none;
  display: flex;
  flex-direction: column;
  align-items: center;
  background: #f0f0f0;
  position: relative;
}
.arrow-box {
  width: 100%;
  height: 20px;
  background: #f6f6f6;
  display: flex;
  align-items: center;
  justify-content: center;
}
.vthumb {
  width: 100%;
  height: 621px;
  background: #ccc;
}
.arrow-end {
  margin-top: auto;
  margin-bottom: 8px;
}
.hscroll {
  height: 20px;
  display: flex;
  align-items: center;
  background: #f0f0f0;
  border-top: 1px solid #fff;
  box-sizing: border-box;
  padding-left: 5px;
  position: relative;
}
.hthumb {
  width: 1359px;
  height: 19px;
  background: #ccc;
  margin-left: 7px;
}
.h-right {
  position: absolute;
  left: 1621px;
}
.tabs {
  height: 38px;
  box-sizing: border-box;
  display: flex;
  background: #e6e6e6;
  border-top: 1px solid #c8c8c8;
  border-bottom: 1px solid #cfcfcf;
}
.tab {
  display: flex;
  align-items: center;
  justify-content: center;
  gap: 5px;
  box-sizing: border-box;
  font-size: 15px;
  color: #555;
  border-right: 1px solid #cfcfcf;
}
.ds {
  width: 163px;
  justify-content: flex-start;
  padding-left: 10px;
}
.sh {
  width: 74px;
}
.active {
  width: 92px;
  background: #fff;
}
.add {
  width: 32px;
}
.status {
  height: 25px;
  display: flex;
  align-items: center;
  background: #ececec;
  font-size: 13px;
  color: #333;
  position: relative;
}
.st {
  position: relative;
  z-index: 1;
  white-space: nowrap;
}
.st1 {
  margin-left: 3px;
  width: 121px;
}
.st2 {
  width: 90px;
}
.cells {
  margin-left: auto;
  display: flex;
  height: 100%;
}
.cells i {
  display: block;
  box-sizing: border-box;
  border-left: 1px solid #d0d0d0;
}
.corner {
  position: absolute;
  left: 1903px;
  top: 6px;
  width: 11px;
  height: 11px;
  background: #666;
}
.mark {
  position: absolute;
  left: 1673px;
  top: 1px;
  font-size: 19px;
  line-height: 24px;
  color: rgba(115, 115, 115, 0.75);
  white-space: nowrap;
  font-family: "Liberation Sans", "Noto Sans CJK SC", sans-serif;
}
.taskbar {
  height: 9px;
  background: linear-gradient(90deg, #2c2c2c 0, #2c2c2c 420px, #2f2226 520px, #2b2b2b 900px);
  display: flex;
}
.task-win {
  margin-left: 60px;
  width: 360px;
  height: 9px;
  background: #fff;
}
.task-win svg {
  display: block;
}
</style>
